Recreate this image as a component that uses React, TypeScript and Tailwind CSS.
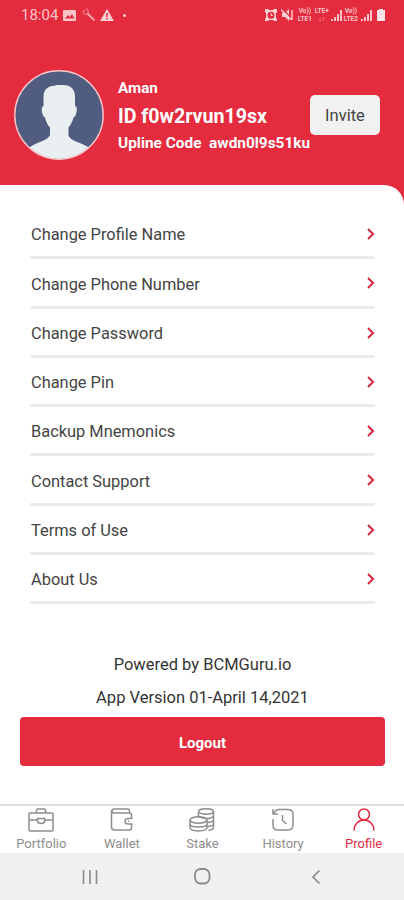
import React from "react";

/* ------------------------------------------------------------------ */
/*  Status bar                                                          */
/* ------------------------------------------------------------------ */
function SignalBars() {
  return (
    <svg viewBox="0 0 12 11" className="h-[11px] w-3" fill="#fbc4c8">
      <path d="M0 9h2v2H0zM3 7h2v4H3zM6 4h2v7H6zM9 0h2v11H9z" />
    </svg>
  );
}

function NetworkLabel({ top, bottom }: { top: string; bottom: string }) {
  return (
    <span className="flex flex-col text-center text-[6.500px] leading-[8px] font-bold">
      <span>{top}</span>
      <span>{bottom}</span>
    </span>
  );
}

function StatusBar() {
  return (
    <div className="flex h-[30px] items-center justify-between pr-[19px] pl-[21px] text-[#fbc4c8]">
      <div className="flex items-center">
        <span className="w-[42px] text-[15px] leading-none">18:04</span>
        <svg viewBox="0 0 13 11" className="h-[11px] w-[13px]">
          <rect width="13" height="11" rx="1" fill="#fbc4c8" />
          <path d="M2 8.5 5 5l2 2 2-3 2.500 4.500z" fill="#e52b3e" />
        </svg>
        <svg viewBox="0 0 14 14" className="ml-[6px] h-[14px] w-[14px]" fill="none" stroke="#f7a5ad">
          <path d="M1 4c0 2 3 3 4.500 1.500S6 1 4 1M1 2.500l2 1" />
          <path d="m5.500 5.500 7 7" strokeWidth="1.800" />
        </svg>
        <svg viewBox="0 0 14 12" className="ml-[4px] h-3 w-[14px]">
          <path d="M7 0l7 12H0z" fill="#fbd0d3" />
          <path d="M7 4v4M7 9v1.500" stroke="#e52b3e" strokeWidth="1.500" />
        </svg>
        <span className="ml-[9px] h-[3px] w-[3px] rounded-full bg-[#fbd0d3]" />
      </div>
      <div className="flex items-center">
        <svg viewBox="0 0 12 12" className="h-3 w-3">
          <path d="M0 0h3l1 1h4l1-1h3v3l-1 1v5l1 1v2H9l-1-1H4l-1 1H0v-2l1-1V4L0 3z" fill="#fbd0d3" />
          <circle cx="6" cy="6.200" r="3.500" fill="#e52b3e" />
          <path d="M6 4v2.500h2" stroke="#fbd0d3" fill="none" />
        </svg>
        <svg viewBox="0 0 13 12" className="ml-[4px] h-3 w-[13px]">
          <path d="M1 4h3l4-4v12L4 8H1z" fill="#fbd0d3" />
          <path d="m1.500 0 10 10" stroke="#e52b3e" strokeWidth="1.200" />
          <path d="m0 0.500 10 10M11 1v10" stroke="#fbd0d3" strokeWidth="1.400" />
        </svg>
        <span className="ml-[4px] flex w-[31px] justify-between">
          <NetworkLabel top="Vo))" bottom="LTE1" />
          <NetworkLabel top="LTE+" bottom="↓↑" />
        </span>
        <span className="ml-[2px]">
          <SignalBars />
        </span>
        <span className="ml-px">
          <NetworkLabel top="Vo))" bottom="LTE2" />
        </span>
        <span className="ml-[3px]">
          <SignalBars />
        </span>
        <svg viewBox="0 0 8 12" className="ml-[4px] h-3 w-2" fill="#fde3e5">
          <path d="M2 0h4v1h2v11H0V1h2z" />
        </svg>
      </div>
    </div>
  );
}

/* ------------------------------------------------------------------ */
/*  Profile header                                                      */
/* ------------------------------------------------------------------ */
function Avatar() {
  return (
    <svg viewBox="0 0 90 90" className="h-[90px] w-[90px] shrink-0">
      <defs>
        <clipPath id="avatar">
          <circle cx="45" cy="45" r="44" />
        </clipPath>
      </defs>
      <circle cx="45" cy="45" r="44" fill="#505d80" />
      <path
        clipPath="url(#avatar)"
        fill="#e9eff0"
        d="M42 15h7c8 0 12 4.500 12 12v9c2 .5 2 3 1.500 6-.5 3-1.500 5-3 5.500-1 4-3 7.500-5 10v8c1 3 5 5 10 7 5 2 10 4 13 7V92H13V80c3-4 8-6 13-8 5-2 9-4 10-7v-7.500c-2.500-2.500-4-6-5-10-1.500-.5-2.500-2.500-3-5.500-.5-3-.3-5.500 1.500-6v-9c0-7.500 4.500-11.500 12.500-11.500z"
      />
      <circle cx="45" cy="45" r="44.200" fill="none" stroke="#f5c5cb" strokeWidth="1.400" />
    </svg>
  );
}

function ProfileHeader() {
  return (
    <div className="flex h-[155px] pt-10 pl-[14px]">
      <Avatar />
      <div className="ml-[14px] w-[192px] pt-[8px] font-bold whitespace-nowrap text-white">
        <p className="text-[15.250px] leading-5">Aman</p>
        <p className="mt-[7px] text-[19.600px] leading-6">ID f0w2rvun19sx</p>
        <p className="mt-[4px] text-[15.400px] leading-5">
          Upline Code&nbsp; awdn0l9s51ku
        </p>
      </div>
      <button
        type="button"
        className="mt-[25px] h-10 w-[70px] rounded-[5px] bg-[#f1f1f1] pt-[3px] text-[16.500px] text-[#444]"
      >
        Invite
      </button>
    </div>
  );
}

/* ------------------------------------------------------------------ */
/*  Menu                                                                */
/* ------------------------------------------------------------------ */
const MENU_ITEMS = [
  "Change Profile Name",
  "Change Phone Number",
  "Change Password",
  "Change Pin",
  "Backup Mnemonics",
  "Contact Support",
  "Terms of Use",
  "About Us",
];

function MenuRow({ label }: { label: string }) {
  return (
    <li className="flex h-[49.250px] items-center justify-between border-b-[3px] border-[#ebebeb] pt-[2px]">
      <span className="pt-[3px] pl-px text-[16.400px] text-[#444]">{label}</span>
      <svg viewBox="0 0 8 12" className="h-3 w-2" fill="none" stroke="#d9243f" strokeWidth="2">
        <path d="m1 1 5 5-5 5" />
      </svg>
    </li>
  );
}

/* ------------------------------------------------------------------ */
/*  Bottom navigation                                                   */
/* ------------------------------------------------------------------ */
const TABS = [
  {
    label: "Portfolio",
    icon: (
      <>
        <rect x="1" y="5" width="24" height="18" rx="1" />
        <path d="M8.500 5V2.500Q8.500 1 10 1h6q1.500 0 1.500 1.500V5M1 12h8.500M16.500 12H25M9.500 10.500h7V13q0 2.500-3.500 2.500T9.500 13z" />
      </>
    ),
  },
  {
    label: "Wallet",
    icon: (
      <>
        <path d="M3.500 5h17q2 0 2 2v3.500M22.500 16v4q0 2-2 2h-15q-3 0-3-3V4q0-3 3-3h13q2 0 2 2v2M3 3q0 2 2 2" />
        <path d="M23.500 10.500H19q-3 0-3 2.750T19 16h4.500" />
        <path d="M19 13.200h1" />
      </>
    ),
  },
  {
    label: "Stake",
    icon: (
      <>
        <ellipse cx="17" cy="3.500" rx="7.500" ry="2.700" />
        <path d="M9.500 3.500v5.500M24.500 3.500v16q0 2-5 3M24.500 7.500c0 3.500-11 4-15 1M24.500 11.500c0 2-3 3-6 3M24.500 15.500c0 2-3 3-6 3" />
        <ellipse cx="9.500" cy="12" rx="8.500" ry="3.200" />
        <path d="M1 12v7.500c0 4.500 17 4.500 17 0V12M1 16c0 4 17 4 17 0" />
      </>
    ),
  },
  {
    label: "History",
    icon: (
      <>
        <path d="M3 1v5h5M3.500 5.500Q6 1.500 9 1.500h9q5 0 5 5v10q0 5.500-5 5.500H8q-5 0-5-5v-6" />
        <path d="M12.500 7v5.500l4 3.500" />
      </>
    ),
  },
  {
    label: "Profile",
    icon: (
      <>
        <circle cx="13" cy="6.500" r="5.500" />
        <path d="M3 22.500c0-6 4.500-10.500 10-10.500s10 4.500 10 10.500" />
      </>
    ),
  },
];

function TabBar({ active }: { active: string }) {
  return (
    <nav className="grid h-[49px] grid-cols-5 border-t-2 border-[#dedede] bg-white pl-px">
      {TABS.map(({ label, icon }) => (
        <button
          key={label}
          type="button"
          className={
            label === active
              ? "flex flex-col items-center pt-[2px] text-[#e02b43]"
              : "flex flex-col items-center pt-[2px] text-[#8d8d8d]"
          }
        >
          <svg viewBox="0 0 26 24" className="h-6 w-[26px]" fill="none" stroke="currentColor" strokeWidth="1.500">
            {icon}
          </svg>
          <span className="mt-[4px] text-[13px] leading-4">{label}</span>
        </button>
      ))}
    </nav>
  );
}

function SystemBar() {
  return (
    <div className="grid h-[47px] grid-cols-[82px_112px_117px_1fr] items-center bg-[#f0f0f0]">
      <svg viewBox="0 0 16 16" className="col-start-2 h-4 w-4" stroke="#8b8b8b" strokeWidth="1.600">
        <path d="M1.500 1v14M8 1v14M14.500 1v14" />
      </svg>
      <svg viewBox="0 0 17 17" className="h-[17px] w-[17px]" fill="none" stroke="#8b8b8b" strokeWidth="1.800">
        <rect x="1" y="1" width="14.500" height="14.500" rx="5.500" />
      </svg>
      <svg viewBox="0 0 10 16" className="h-4 w-[10px]" fill="none" stroke="#8b8b8b" strokeWidth="1.700">
        <path d="M8.500 1.500 2 8l6.500 6.500" />
      </svg>
    </div>
  );
}

export default function App() {
  return (
    <div className="flex h-[900px] w-[404px] flex-col overflow-hidden bg-[#e52b3e] font-['Roboto',sans-serif]">
      <StatusBar />
      <ProfileHeader />
      <main className="flex flex-1 flex-col rounded-tr-[20px] bg-white pt-[25px]">
        <ul className="mr-[29px] ml-[30px]">
          {MENU_ITEMS.map((label) => (
            <MenuRow key={label} label={label} />
          ))}
        </ul>
        <div className="mt-[44px] pl-px text-center text-[16.500px] leading-[33px] text-[#333]">
          <p>Powered by BCMGuru.io</p>
          <p>App Version 01-April 14,2021</p>
        </div>
        <button
          type="button"
          className="mt-[3px] mr-[19px] ml-5 h-[49px] rounded-[4px] bg-[#e52b3e] pt-[3px] text-[15px] font-bold text-white"
        >
          Logout
        </button>
      </main>
      <TabBar active="Profile" />
      <SystemBar />
    </div>
  );
}
